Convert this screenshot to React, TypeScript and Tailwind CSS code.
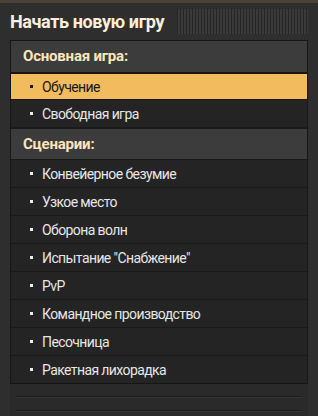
const sections = [
  {
    title: "Основная игра:",
    items: ["Обучение", "Свободная игра"],
  },
  {
    title: "Сценарии:",
    items: [
      "Конвейерное безумие",
      "Узкое место",
      "Оборона волн",
      'Испытание "Снабжение"',
      "PvP",
      "Командное производство",
      "Песочница",
      "Ракетная лихорадка",
    ],
  },
];

function Row({ label, active }: { label: string; active?: boolean }) {
  return (
    <div
      className={
        active
          ? "flex h-[27px] items-center gap-[9px] border-t-2 border-[#1a1510] bg-[#f2bb5e] pl-[19px] text-[#1b1712]"
          : "flex h-[28px] items-center gap-[9px] border-t border-[#191919] bg-[#242424] pl-[19px] text-[#e6e6e6]"
      }
    >
      <span className={active ? "h-[3px] w-[3px] bg-[#1b1712]" : "h-[3px] w-[3px] bg-[#eeeeee]"} />
      <span className="text-[14px] leading-none tracking-[-0.6px]">{label}</span>
    </div>
  );
}

export default function App() {
  return (
    <div
      className="flex h-[416px] w-[318px] flex-col overflow-hidden bg-[#2f2e2e]"
      style={{ fontFamily: '"Roboto", "Liberation Sans", sans-serif' }}
    >
      <div className="h-[3px] bg-[#4a4238]" />
      <div className="flex h-[37px] items-center gap-[13px] pl-[10px] pr-[10px]">
        <h1 className="text-[18px] font-bold leading-none tracking-[-0.4px] text-[#fbeedb]">Начать новую игру</h1>
        <div className="h-[25px] flex-1 bg-[repeating-linear-gradient(90deg,#262626_0px,#262626_1px,#3a3a3a_1px,#3a3a3a_3px)]" />
      </div>

      <div className="mx-[10px] flex flex-col border border-[#161616] bg-[#242424]">
        {sections.map((s, si) => (
          <div key={s.title} className="flex flex-col">
            <div
              className={
                si === 0
                  ? "flex h-[31px] items-center bg-[#3c3c3c] pl-[12px]"
                  : "flex h-[32px] items-center border-t-2 border-[#1a1a1a] bg-[#3c3c3c] pl-[12px]"
              }
            >
              <span className="text-[15px] font-bold leading-none tracking-[-0.2px] text-[#fde5bf]">{s.title}</span>
            </div>
            {s.items.map((it, i) => (
              <Row key={it} label={it} active={si === 0 && i === 0} />
            ))}
          </div>
        ))}
      </div>

      <div className="mx-[10px] flex flex-1 flex-col bg-[#2a2a2a] px-[6px] pt-[12px]">
        <div className="h-px bg-[#1c1c1c]" />
        <div className="h-px bg-[#363636]" />
        <div className="mt-[12px] h-px bg-[#1c1c1c]" />
        <div className="h-px bg-[#363636]" />
      </div>
    </div>
  );
}
